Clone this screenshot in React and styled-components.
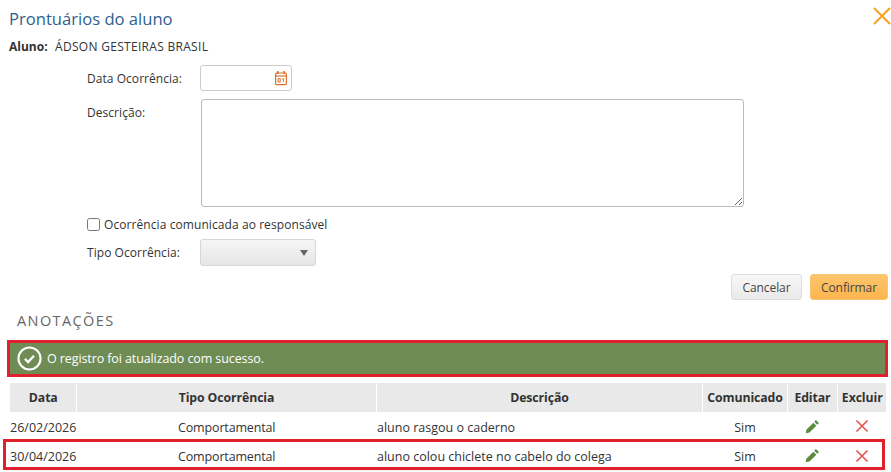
import React from "react";
import styled, { createGlobalStyle } from "styled-components";

const GlobalStyle = createGlobalStyle`
  html, body {
    margin: 0;
    padding: 0;
    background: #fff;
    overflow: hidden;
  }
  * {
    box-sizing: border-box;
  }
`;

const Page = styled.div`
  width: 891px;
  height: 472px;
  font-family: "Open Sans", "Noto Sans", sans-serif;
  font-size: 12px;
  color: #333;
  position: relative;
  overflow: hidden;
`;

const Header = styled.div`
  display: flex;
  justify-content: space-between;
  align-items: flex-start;
  padding: 8px 0 0 9px;
  height: 38px;
`;

const Title = styled.h1`
  margin: 0;
  font-size: 16.6px;
  line-height: 22px;
  font-weight: 400;
  color: #2f5f8f;
`;

const CloseButton = styled.button`
  border: none;
  background: none;
  padding: 0;
  width: 18px;
  height: 18px;
  margin-top: -1px;
  display: block;
`;

const StudentLine = styled.div`
  padding-left: 9px;
  height: 19px;
  line-height: 17px;
  font-size: 12px;
  letter-spacing: 0.3px;

  b {
    letter-spacing: 0;
    margin-right: 4px;
  }
`;

const Form = styled.form`
  padding-left: 87px;
  margin-top: 8px;
`;

const Row = styled.div`
  display: flex;
  align-items: ${(p) => (p.$top ? "flex-start" : "center")};
  margin-bottom: ${(p) => p.$gap || 0}px;
`;

const Label = styled.label`
  width: 113px;
  font-size: 12px;
  letter-spacing: 0.05px;
  padding-top: ${(p) => (p.$top ? 5 : 0)}px;
`;

const DateField = styled.div`
  width: 92px;
  height: 26px;
  border: 1px solid #ccc;
  border-radius: 3px;
  display: flex;
  align-items: center;
  justify-content: flex-end;
  padding-right: 3px;
`;

const TextArea = styled.textarea`
  width: 543px;
  height: 108px;
  margin: 0 0 0 1px;
  border: 1px solid #bbb;
  border-radius: 3px;
  background: #fff;
`;

const CheckLabel = styled.label`
  display: flex;
  align-items: center;
  height: 16px;
  font-size: 12px;
  letter-spacing: 0.08px;
`;

const CheckBox = styled.input`
  width: 13px;
  height: 13px;
  margin: 0 4px 0 0;
`;

const SelectBox = styled.div`
  width: 116px;
  height: 27px;
  border: 1px solid #d5d5d5;
  border-radius: 3px;
  background: linear-gradient(#f6f6f6, #e6e6e6);
  display: flex;
  align-items: center;
  justify-content: flex-end;
  padding-right: 7px;
`;

const Arrow = styled.span`
  width: 0;
  height: 0;
  border-left: 4px solid transparent;
  border-right: 4px solid transparent;
  border-top: 6px solid #666;
`;

const Actions = styled.div`
  display: flex;
  justify-content: flex-end;
  gap: 8px;
  padding-right: 3px;
  margin-top: 8px;
`;

const Button = styled.button`
  height: 26px;
  width: ${(p) => p.$width}px;
  padding: 0;
  font-family: inherit;
  font-size: 12px;
  letter-spacing: -0.1px;
  color: #444;
  border-radius: 3px;
  border: 1px solid ${(p) => (p.$primary ? "#fbc56f" : "#ddd")};
  background: ${(p) =>
    p.$primary
      ? "linear-gradient(#fdc56c, #fbb54e)"
      : "linear-gradient(#f8f8f8, #e9e9e9)"};
`;

const SectionTitle = styled.h2`
  margin: 12px 0 0 17px;
  height: 18px;
  line-height: 18px;
  font-size: 14.5px;
  font-weight: 400;
  letter-spacing: 1.4px;
  color: #666;
`;

const Alert = styled.div`
  margin: 10px 3px 0 7px;
  height: 37px;
  border: 3px solid #e0202c;
  background: #6f8c55;
  color: #fff;
  display: flex;
  align-items: center;
  gap: 5px;
  padding-left: 7px;
  font-size: 12.5px;
  letter-spacing: -0.1px;
`;

const Table = styled.table`
  margin: 6px 0 0 10px;
  width: 876px;
  table-layout: fixed;
  border-collapse: collapse;
`;

const Th = styled.th`
  width: ${(p) => p.$width}px;
  height: 29px;
  padding: 0 0 0 1px;
  background: #e9e9e9;
  border-left: 1px solid #fff;
  font-size: 12.3px;
  font-weight: 700;
  letter-spacing: -0.1px;
  color: #333;
  text-align: center;

  &:first-child {
    border-left: none;
  }
`;

const Td = styled.td`
  height: 29px;
  padding: 2px 0 0 ${(p) => p.$pad || 0}px;
  font-size: 12.5px;
  letter-spacing: ${(p) => p.$spacing || 0}px;
  text-align: ${(p) => (p.$center ? "center" : "left")};
  vertical-align: middle;
`;

const IconTd = styled.td`
  height: 29px;
  padding: 0 0 0 1px;
  vertical-align: middle;
`;

const Tr = styled.tr`
  border-bottom: 1px solid #f1f1f1;
`;

const RowHighlight = styled.div`
  position: absolute;
  left: 3px;
  top: 439px;
  width: 882px;
  height: 31px;
  border: 3px solid #e0202c;
  pointer-events: none;
`;

const IconSlot = styled.svg`
  display: block;
  margin: 0 auto;
  width: ${(p) => p.$size}px;
  height: ${(p) => p.$size}px;
`;

const CalendarIcon = () => (
  <svg width="14" height="16" viewBox="0 0 14 16" fill="none" stroke="#d9702c" strokeWidth="1.2">
    <rect x="1.6" y="3" width="10.8" height="11.6" rx="1" />
    <path d="M1.6 6h10.8" />
    <path d="M3.8 1v3M10.2 1v3" strokeWidth="1.6" />
    <path d="M4 8.6h2.2v3.5H4zM8.2 9.2l1.2-.6v3.5" strokeWidth="1" />
  </svg>
);

const CheckCircle = () => (
  <svg width="25" height="25" viewBox="0 0 24 24" fill="none" stroke="#fff">
    <circle cx="12" cy="12" r="10.6" strokeWidth="2" />
    <path d="M7.6 12.4l3.1 3 5.6-6" strokeWidth="2.2" />
  </svg>
);

const EditIcon = () => (
  <IconSlot $size={15} viewBox="0 0 14 14">
    <path d="M10.2 1l2.8 2.8-1.6 1.6-2.8-2.8zM7.8 3.4l2.8 2.8-6.4 6.4L.6 13.4l.8-3.6z" fill="#5c8a3f" />
  </IconSlot>
);

const RemoveIcon = () => (
  <IconSlot $size={14} viewBox="0 0 14 14" fill="none" stroke="#e4524f" strokeWidth="1.6">
    <path d="M1.5 1.5l11 11M12.5 1.5l-11 11" />
  </IconSlot>
);

const rows = [
  { date: "26/02/2026", type: "Comportamental", text: "aluno rasgou o caderno" },
  { date: "30/04/2026", type: "Comportamental", text: "aluno colou chiclete no cabelo do colega" },
];

export default function App() {
  return (
    <Page>
      <GlobalStyle />
      <Header>
        <Title>Prontuários do aluno</Title>
        <CloseButton type="button">
          <svg width="18" height="18" viewBox="0 0 18 18" fill="none" stroke="#f6a21e" strokeWidth="2">
            <path d="M1 1l16 16M17 1L1 17" />
          </svg>
        </CloseButton>
      </Header>
      <StudentLine>
        <b>Aluno:</b> ÁDSON GESTEIRAS BRASIL
      </StudentLine>
      <Form>
        <Row $gap={8}>
          <Label>Data Ocorrência:</Label>
          <DateField>
            <CalendarIcon />
          </DateField>
        </Row>
        <Row $top $gap={9}>
          <Label $top>Descrição:</Label>
          <TextArea />
        </Row>
        <Row $gap={7}>
          <CheckLabel>
            <CheckBox type="checkbox" />
            Ocorrência comunicada ao responsável
          </CheckLabel>
        </Row>
        <Row>
          <Label>Tipo Ocorrência:</Label>
          <SelectBox>
            <Arrow />
          </SelectBox>
        </Row>
      </Form>
      <Actions>
        <Button type="button" $width={71}>Cancelar</Button>
        <Button type="button" $width={78} $primary>Confirmar</Button>
      </Actions>
      <SectionTitle>ANOTAÇÕES</SectionTitle>
      <Alert>
        <CheckCircle />
        O registro foi atualizado com sucesso.
      </Alert>
      <Table>
        <thead>
          <tr>
            <Th $width={66}>Data</Th>
            <Th $width={300}>Tipo Ocorrência</Th>
            <Th $width={326}>Descrição</Th>
            <Th $width={85}>Comunicado</Th>
            <Th $width={50}>Editar</Th>
            <Th $width={49}>Excluir</Th>
          </tr>
        </thead>
        <tbody>
          {rows.map((row) => (
            <Tr key={row.date}>
              <Td>{row.date}</Td>
              <Td $pad={102} $spacing={-0.15}>{row.type}</Td>
              <Td $pad={1}>{row.text}</Td>
              <Td $pad={1} $center>Sim</Td>
              <IconTd><EditIcon /></IconTd>
              <IconTd><RemoveIcon /></IconTd>
            </Tr>
          ))}
        </tbody>
      </Table>
      <RowHighlight />
    </Page>
  );
}
